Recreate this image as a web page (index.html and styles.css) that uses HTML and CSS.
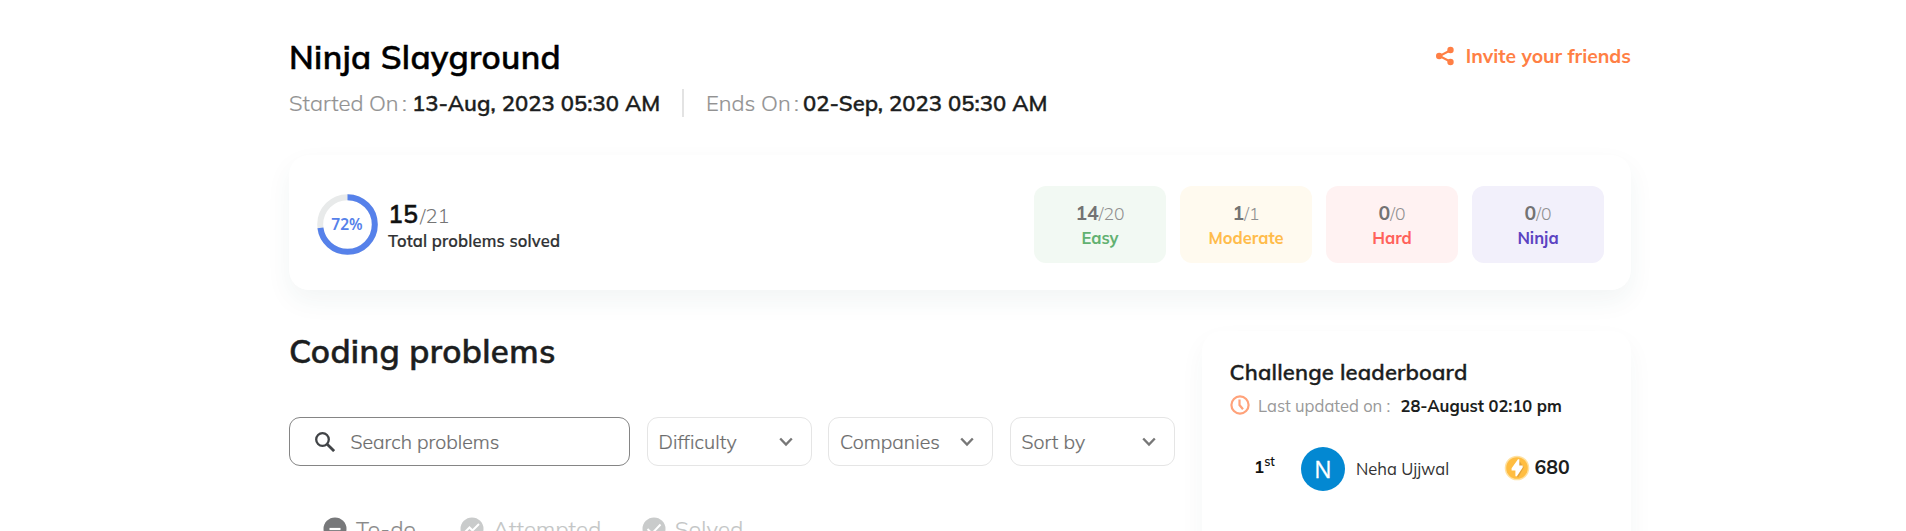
FILE: index.html
```
<!DOCTYPE html>
<html lang="en">
<head>
<meta charset="utf-8">
<title>Ninja Slayground</title>
<link rel="stylesheet" href="styles.css">
</head>
<body>
<main class="page">
  <header class="header">
    <div>
      <h1 class="title">Ninja Slayground</h1>
      <div class="dates">
        <span class="date-label start-label">Started On</span><span class="date-colon">:</span><span class="date-value start-value">13-Aug, 2023 05:30 AM</span>
        <span class="divider"></span>
        <span class="date-label end-label">Ends On</span><span class="date-colon">:</span><span class="date-value">02-Sep, 2023 05:30 AM</span>
      </div>
    </div>
    <a class="invite">
      <svg width="20" height="20" viewBox="0 0 20 20"><path d="M16 4 4.5 10 16 16" fill="none" stroke="currentColor" stroke-width="2"/><circle cx="15.5" cy="4" r="3.2" fill="currentColor"/><circle cx="4.2" cy="10" r="3.2" fill="currentColor"/><circle cx="15.5" cy="16" r="3.2" fill="currentColor"/></svg>
      <span>Invite your friends</span>
    </a>
  </header>

  <section class="summary">
    <div class="ring">
      <svg width="61" height="61" viewBox="0 0 61 61"><circle cx="30.5" cy="30.5" r="27.3" fill="none" stroke="#e8eaea" stroke-width="6"/><circle cx="30.5" cy="30.5" r="27.3" fill="none" stroke="#5681ea" stroke-width="6" pathLength="100" stroke-dasharray="73 27" transform="rotate(-90 30.5 30.5)"/></svg>
      <span class="ring-text">72%</span>
    </div>
    <div class="total">
      <div class="total-count"><b>15</b><span>/21</span></div>
      <div class="total-label">Total problems solved</div>
    </div>
    <div class="tiles">
      <div class="tile easy"><div class="count"><b>14</b>/20</div><div class="level">Easy</div></div>
      <div class="tile moderate"><div class="count"><b>1</b>/1</div><div class="level">Moderate</div></div>
      <div class="tile hard"><div class="count"><b>0</b>/0</div><div class="level">Hard</div></div>
      <div class="tile ninja"><div class="count"><b>0</b>/0</div><div class="level">Ninja</div></div>
    </div>
  </section>

  <div class="columns">
    <section class="problems">
      <h2 class="heading">Coding problems</h2>
      <div class="filters">
        <div class="search">
          <svg width="20" height="20" viewBox="0 0 20 20" fill="none" stroke="#414447"><circle cx="7.5" cy="7.5" r="6.3" stroke-width="2.3"/><path d="m12.2 12.2 6.9 6.9" stroke-width="2.8"/></svg>
          <span>Search problems</span>
        </div>
        <div class="select"><span>Difficulty</span><svg width="14" height="10" viewBox="0 0 14 10"><path d="m1.2 1.5 5.8 6 5.8-6" fill="none" stroke="#777" stroke-width="2.4"/></svg></div>
        <div class="select"><span>Companies</span><svg width="14" height="10" viewBox="0 0 14 10"><path d="m1.2 1.5 5.8 6 5.8-6" fill="none" stroke="#777" stroke-width="2.4"/></svg></div>
        <div class="select"><span>Sort by</span><svg width="14" height="10" viewBox="0 0 14 10"><path d="m1.2 1.5 5.8 6 5.8-6" fill="none" stroke="#777" stroke-width="2.4"/></svg></div>
      </div>
      <nav class="tabs">
        <div class="tab active todo"><svg width="24" height="24" viewBox="0 0 24 24"><circle cx="12" cy="12" r="11.5" fill="#77787a"/><path d="M6.5 12h11" stroke="#fff" stroke-width="2.2"/></svg><span>To-do</span></div>
        <div class="tab attempted"><svg width="24" height="24" viewBox="0 0 24 24"><circle cx="12" cy="12" r="11.5" fill="#c9cbcb"/><path d="m5 15 4.5-4.5 3 3L19 7" fill="none" stroke="#fff" stroke-width="2"/></svg><span>Attempted</span></div>
        <div class="tab"><svg width="24" height="24" viewBox="0 0 24 24"><circle cx="12" cy="12" r="11.5" fill="#c9cbcb"/><path d="m5.5 12 4.5 4.5 8.5-9" fill="none" stroke="#fff" stroke-width="2"/></svg><span>Solved</span></div>
      </nav>
    </section>

    <aside class="leaderboard">
      <h3 class="board-title">Challenge leaderboard</h3>
      <div class="updated">
        <svg width="20" height="20" viewBox="0 0 20 20" fill="none" stroke="#ffa27a" stroke-width="2.2"><circle cx="10" cy="10" r="8.6"/><path d="M9.5 4.5V10l3.5 4.2"/></svg>
        <span class="updated-label">Last updated on :</span><span class="updated-value">28-August 02:10 pm</span>
      </div>
      <div class="entry">
        <span class="rank">1<sup>st</sup></span>
        <span class="avatar">N</span>
        <span class="name">Neha Ujjwal</span>
        <svg class="coin" width="26" height="26" viewBox="0 0 26 26"><circle cx="13" cy="13" r="12.3" fill="#ffe1a1"/><circle cx="13" cy="13" r="10.8" fill="#ffbd41"/><path d="m15.5 6 4.3 6.5-5.6 10-2-2z" fill="#e2a23b"/><path d="M14 4.2h1.3v6.2h3.4v2.2L12.9 21.2h-1.5v-5.7H7.6v-2.2z" fill="#fff"/></svg>
        <span class="points">680</span>
      </div>
    </aside>
  </div>
</main>
</body>
</html>
```
FILE: styles.css
```
* { box-sizing: border-box; }
body { margin: 0; background: #fff; color: #1c1e20; font-family: Mulish, Muli, Lato, "Noto Sans", sans-serif; }
h1, h2, h3 { margin: 0; }
svg { display: block; flex: none; }
.page { width: 1402px; height: 531px; overflow: hidden; margin-left: 259px; padding: 37px 30px 0; }

.header { display: flex; justify-content: space-between; height: 118px; }
.title { font-size: 33px; line-height: 40px; font-weight: 600; letter-spacing: 0.33px; color: #000; -webkit-text-stroke: 0.5px; }
.dates { display: flex; align-items: center; height: 30px; margin-top: 11px; font-size: 22px; line-height: 30px; white-space: nowrap; }
.date-label, .date-colon { color: #929292; font-weight: 300; -webkit-text-stroke: 0.2px; }
.start-label { width: 113px; }
.end-label { width: 88px; }
.start-label + .date-colon { width: 10px; }
.date-colon { width: 9px; }
.date-value { font-weight: 600; letter-spacing: 0.06px; -webkit-text-stroke: 0.35px; }
.start-value { width: 248px; }
.divider { width: 2px; height: 28px; margin: 0 22px; background: #e3e3e3; }
.invite { display: flex; gap: 11px; height: 38px; align-items: center; color: #ff7f45; font-size: 19.3px; font-weight: 700; }

.summary { display: flex; align-items: flex-start; height: 135px; padding: 31px 27px 31px 28px; background: #fff; border-radius: 20px; box-shadow: 0 11px 26px rgba(30, 80, 80, 0.06); }
.ring { position: relative; width: 61px; height: 61px; margin: 8px 0 0 -0.5px; }
.ring-text { position: absolute; inset: 0; line-height: 60px; text-align: center; color: #5681ea; font-family: "Noto Sans", sans-serif; font-size: 15.5px; font-weight: 600; }
.total { margin: 11px 0 0 10.5px; white-space: nowrap; }
.total-count { display: flex; align-items: baseline; gap: 2px; line-height: 34px; }
.total-count b { font-size: 25px; font-weight: 600; color: #111; -webkit-text-stroke: 0.4px; }
.total-count span { font-size: 20px; font-weight: 300; color: #757575; }
.total-label { margin-top: -2px; font-size: 16.5px; line-height: 20px; font-weight: 600; color: #303234; letter-spacing: 0.16px; -webkit-text-stroke: 0.2px; }
.tiles { display: flex; gap: 14px; margin-left: auto; }
.tile { width: 132px; height: 77px; border-radius: 12px; padding-top: 13px; text-align: center; }
.count { font-size: 17.5px; line-height: 28px; font-weight: 300; color: #8f8f8f; }
.count b { font-size: 19.5px; font-weight: 700; color: #737373; }
.level { font-size: 16.5px; line-height: 22px; font-weight: 700; }
.easy { background: #f2f9f3; }
.easy .level { color: #62b171; }
.moderate { background: #fffaef; }
.moderate .level { color: #ffbc4b; }
.hard { background: #fff2f2; }
.hard .level { color: #ff625b; }
.ninja { background: #f2f0fb; }
.ninja .level { color: #5c43c2; }

.columns { display: flex; justify-content: space-between; }
.problems { width: 886px; padding-top: 40px; }
.heading { font-size: 33px; line-height: 42px; font-weight: 600; letter-spacing: 0.38px; -webkit-text-stroke: 0.5px; }
.filters { display: flex; margin-top: 45px; gap: 16.5px; }
.search, .select { display: flex; flex: none; align-items: center; height: 49px; border: 1px solid #e5e5e5; border-radius: 11px; font-size: 19.5px; font-weight: 300; color: #6d6d6d; white-space: nowrap; -webkit-text-stroke: 0.2px; }
.search { width: 341px; border-color: #858585; padding-left: 25px; gap: 15.5px; }
.select { justify-content: space-between; width: 165px; padding: 0 18px 0 11px; letter-spacing: 0.05px; }
.tabs { display: flex; margin-top: 50px; padding-left: 34px; }
.tab { display: flex; align-items: center; gap: 9px; font-size: 22px; line-height: 26px; font-weight: 300; letter-spacing: 0.2px; color: #c3c5c5; white-space: nowrap; -webkit-text-stroke: 0.2px; }
.tab.active { color: #8a8a8a; }
.todo { width: 137px; }
.attempted { width: 182px; }

.leaderboard { width: 429px; height: 300px; margin-top: 41px; padding: 27px 28px 0 27.5px; background: #fff; border-radius: 20px; box-shadow: 0 11px 26px rgba(30, 80, 80, 0.045); }
.board-title { font-size: 22px; line-height: 28px; font-weight: 600; letter-spacing: 0.16px; -webkit-text-stroke: 0.35px; }
.updated { display: flex; align-items: center; height: 24px; margin-top: 7px; font-size: 16.5px; white-space: nowrap; }
.updated-label { width: 142.5px; margin-left: 8.5px; color: #999; }
.updated-value { font-weight: 700; }
.entry { display: flex; align-items: center; height: 44px; margin-top: 30px; padding-left: 24.5px; }
.rank { width: 47px; margin-top: -5px; font-size: 17px; font-weight: 700; color: #111; }
.rank sup { font-size: 12.5px; line-height: 0; font-weight: 600; }
.avatar { width: 44px; height: 44px; border-radius: 50%; background: #0388d2; color: #fff; font-family: "Open Sans", sans-serif; font-size: 23px; line-height: 44px; text-align: center; -webkit-text-stroke: 0.3px; }
.name { width: 147.5px; margin: -1px 0 0 11px; font-size: 16.5px; color: #333; }
.coin { margin-top: -3px; }
.points { margin: -5px 0 0 5px; font-size: 19.5px; font-weight: 700; }
```
